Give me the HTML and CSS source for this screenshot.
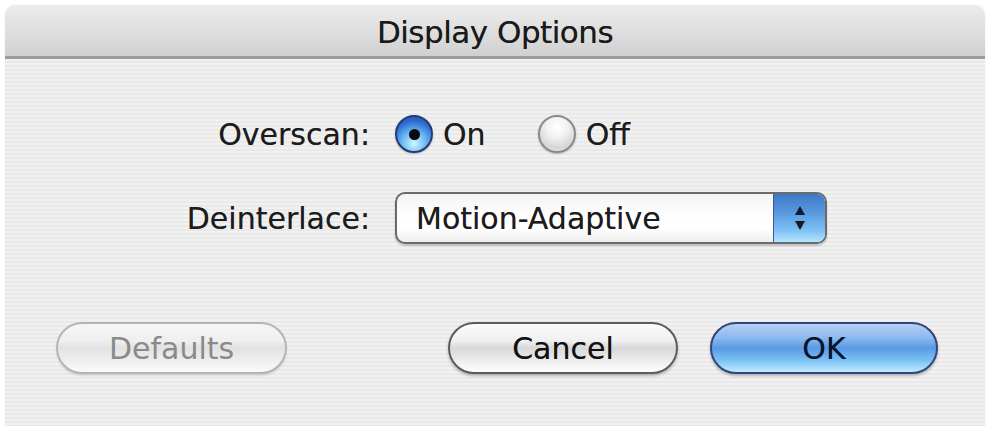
FILE: index.html
```html
<!DOCTYPE html>
<html lang="en">
<head>
  <meta charset="UTF-8">
  <title>Display Options</title>
  <link rel="stylesheet" href="styles.css">
</head>
<body>
  <div class="window">
    <div class="titlebar">Display Options</div>
    <div class="content">
      <div class="form">
        <div class="label">Overscan:</div>
        <div class="radios">
          <label class="radio-item"><span class="radio checked"></span>On</label>
          <label class="radio-item"><span class="radio"></span>Off</label>
        </div>
        <div class="label">Deinterlace:</div>
        <div class="popup">
          <span class="popup-text">Motion-Adaptive</span>
          <span class="popup-arrows">
            <svg width="14" height="30" viewBox="0 0 14 30">
              <path d="M7 3 L12 12 L2 12 Z" fill="#14182a"/>
              <path d="M7 27 L12 18 L2 18 Z" fill="#14182a"/>
            </svg>
          </span>
        </div>
      </div>
      <div class="buttons">
        <button class="btn disabled">Defaults</button>
        <button class="btn cancel">Cancel</button>
        <button class="btn default">OK</button>
      </div>
    </div>
  </div>
</body>
</html>
```

FILE: styles.css
```css
* {
  margin: 0;
  padding: 0;
  box-sizing: border-box;
}

body {
  background-color: #fff;
  padding: 5px 5px 0 5px;
  font-family: "DejaVu Sans", Verdana, sans-serif;
  color: #1c1c1c;
}

.window {
  width: 980px;
  height: 421px;
  border-radius: 10px 10px 0 0;
  overflow: hidden;
  display: flex;
  flex-direction: column;
  box-shadow: 0 0 2px rgba(0, 0, 0, 0.08);
}

.titlebar {
  height: 54px;
  background: linear-gradient(#ececec, #dcdcdc 60%, #d0d0d0);
  border-bottom: 3px solid #9c9c9c;
  font-size: 31px;
  letter-spacing: -0.5px;
  color: #1a1a1a;
  text-shadow: 0 0 0.6px rgba(0, 0, 0, 0.6);
  display: flex;
  align-items: center;
  justify-content: center;
  padding-top: 2px;
}

.content {
  flex: 1;
  background: repeating-linear-gradient(#f1f1f1 0, #f1f1f1 2px, #e9e9e9 2px, #e9e9e9 4px);
  padding-top: 55px;
}

.form {
  display: grid;
  grid-template-columns: 365px auto;
  column-gap: 25px;
  row-gap: 38px;
  align-items: center;
  font-size: 30px;
  text-shadow: 0 0 0.6px rgba(0, 0, 0, 0.5);
}

.label {
  text-align: right;
}

.radios {
  display: flex;
  align-items: center;
  height: 40px;
}

.radio-item {
  display: flex;
  align-items: center;
  gap: 10px;
  margin-right: 52px;
}

.radio {
  width: 38px;
  height: 38px;
  border-radius: 50%;
  border: 2px solid #8a8a8a;
  background: radial-gradient(circle at 50% 30%, #ffffff 0, #f2f2f2 35%, #d6d6d6 70%, #f4f4f4 100%);
  box-shadow: 0 1px 2px rgba(0, 0, 0, 0.25);
  display: flex;
  align-items: center;
  justify-content: center;
}

.radio.checked {
  border-color: #263a74;
  background: radial-gradient(circle at 50% 78%, #d0f8ff 0, #6ab8f2 38%, #2a6ad0 72%, #2e4e98 100%);
}

.radio.checked::after {
  content: "";
  width: 11px;
  height: 11px;
  border-radius: 50%;
  background-color: #0a0a14;
}

.popup {
  width: 432px;
  height: 52px;
  border: 2px solid #6a6a6a;
  border-radius: 10px;
  background: linear-gradient(#f4f4f4, #fdfdfd 40%, #ffffff 70%, #eeeeee);
  box-shadow: 0 2px 2px rgba(0, 0, 0, 0.2);
  display: flex;
  align-items: center;
  overflow: hidden;
}

.popup-text {
  flex: 1;
  padding-left: 19px;
}

.popup-arrows {
  width: 52px;
  height: 100%;
  background: linear-gradient(#3d78c8, #5a9ae0 40%, #7cc0f4 75%, #b4e4ff);
  border-left: 1px solid #3c5a98;
  display: flex;
  align-items: center;
  justify-content: center;
}

.buttons {
  display: flex;
  align-items: center;
  margin-top: 78px;
  padding: 0 47px 0 51px;
}

.btn {
  height: 52px;
  width: 230px;
  border-radius: 26px;
  font-family: "DejaVu Sans", Verdana, sans-serif;
  font-size: 30px;
  color: #111;
  text-shadow: 0 0 0.6px rgba(0, 0, 0, 0.5);
  border: 2px solid #5c5c5c;
  background: linear-gradient(#fbfbfb 0, #f0f0f0 35%, #d8d8d8 50%, #ececec 75%, #ffffff 100%);
  box-shadow: 0 2px 3px rgba(0, 0, 0, 0.25);
  cursor: pointer;
}

.btn.disabled {
  width: 231px;
  color: #8a8a8a;
  text-shadow: none;
  border-color: #b4b4b4;
  background: linear-gradient(#f6f6f6 0, #efefef 35%, #e2e2e2 50%, #eeeeee 75%, #fafafa 100%);
  box-shadow: 0 2px 2px rgba(0, 0, 0, 0.1);
}

.btn.cancel {
  margin-left: auto;
}

.btn.default {
  width: 228px;
  margin-left: 32px;
  color: #0a1430;
  border-color: #34447a;
  background: linear-gradient(#b4d0f4 0, #8ab8ee 30%, #5a9ae4 50%, #78c0f4 75%, #c0ecff 100%);
}
```
